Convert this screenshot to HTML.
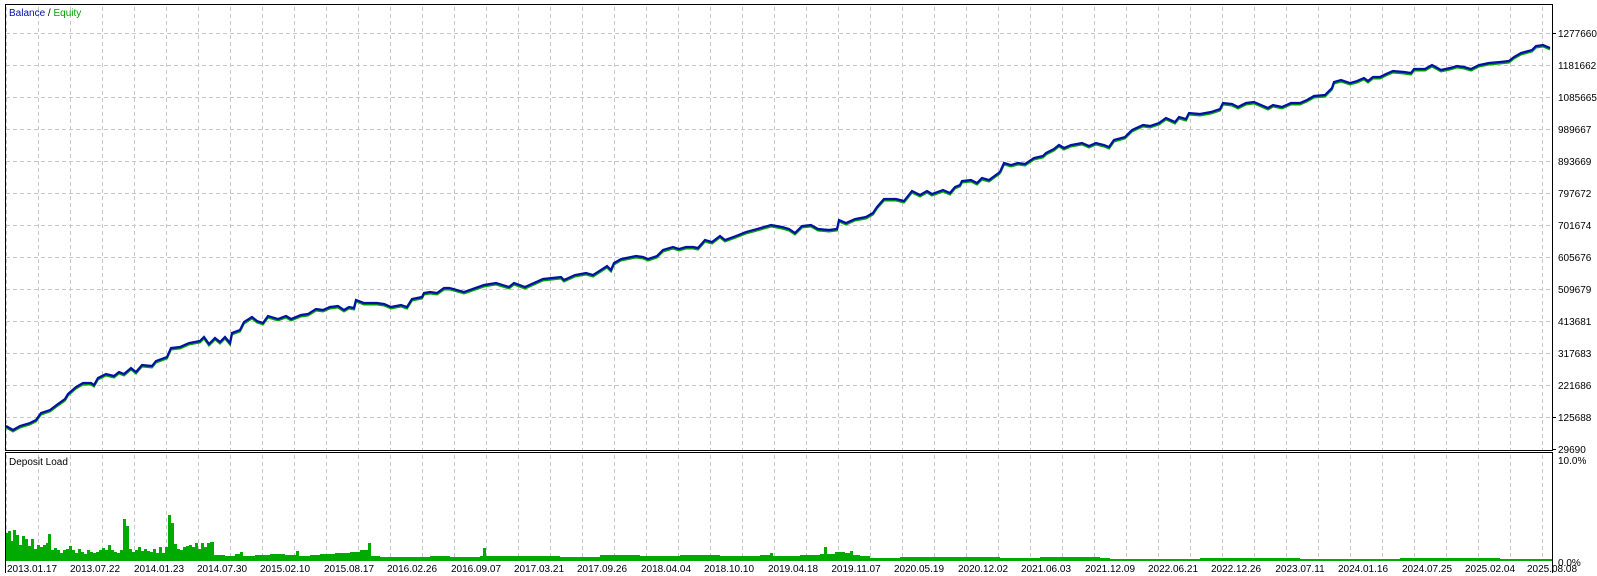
<!DOCTYPE html>
<html><head><meta charset="utf-8"><style>
html,body{margin:0;padding:0;background:#fff;width:1597px;height:576px;overflow:hidden}
svg{display:block}
text{font-family:"Liberation Sans",sans-serif;font-size:10px;fill:#000}
</style></head><body>
<svg width="1597" height="576" viewBox="0 0 1597 576">
<defs>
<pattern id="vg" x="38" y="0" width="32" height="576" patternUnits="userSpaceOnUse">
<line x1="0.5" y1="0" x2="0.5" y2="576" stroke="#c8c8c8" stroke-dasharray="4,3"/>
</pattern>
</defs>
<rect width="1597" height="576" fill="#fff"/>
<rect x="6" y="5" width="1547" height="446" fill="url(#vg)"/>
<g stroke="#c8c8c8" stroke-dasharray="4,3">
<line x1="6" y1="33.5" x2="1553" y2="33.5"/><line x1="6" y1="65.5" x2="1553" y2="65.5"/><line x1="6" y1="97.5" x2="1553" y2="97.5"/><line x1="6" y1="129.5" x2="1553" y2="129.5"/><line x1="6" y1="161.5" x2="1553" y2="161.5"/><line x1="6" y1="193.5" x2="1553" y2="193.5"/><line x1="6" y1="225.5" x2="1553" y2="225.5"/><line x1="6" y1="257.5" x2="1553" y2="257.5"/><line x1="6" y1="289.5" x2="1553" y2="289.5"/><line x1="6" y1="321.5" x2="1553" y2="321.5"/><line x1="6" y1="353.5" x2="1553" y2="353.5"/><line x1="6" y1="385.5" x2="1553" y2="385.5"/><line x1="6" y1="417.5" x2="1553" y2="417.5"/>
</g>
<rect x="6" y="454" width="1547" height="106" fill="url(#vg)"/>
<rect x="5.5" y="4.5" width="1547" height="446" fill="none" stroke="#000"/>
<rect x="5.5" y="452.5" width="1547" height="120" fill="none" stroke="#000"/>
<rect x="6" y="561" width="1546" height="15" fill="#fff"/>
<line x1="5.5" y1="452" x2="5.5" y2="562" stroke="#000"/>
<line x1="1552.5" y1="452" x2="1552.5" y2="562" stroke="#000"/>
<g fill="none" stroke-linejoin="miter">
<g stroke="#00a000" stroke-width="2" transform="translate(0,1.5)">
<polyline points="6,426 13,430 20,426 30,423 36,420 41,413 50,410 58,404 65,399 68,394 76,387 83,383 91,383 94,385 98,378 106,374 114,376 119,372 124,374 131,368 136,372 142,365 152,366 156,361 167,357 171,348 180,347 189,343 200,341 204,337 209,344 215,338 220,342 225,337 230,343 232,333 240,330 244,322 252,317 257,321 263,323 268,316 278,319 286,316 291,319 301,315 308,314 316,309 323,310 330,307 338,306 344,310 349,307 354,308 356,300 364,303 377,303 384,304 391,307 401,305 407,307 412,299 422,297 424,293 430,292 437,293 444,288 450,288"/>
<polyline points="450,288 464,292 484,285 496,283 509,287 514,283 525,287 543,279 561,277 564,280 575,275 586,273 593,275 604,268 607,266 611,270 614,263 621,259 636,256 643,257 648,259 657,256 663,250 673,247 679,249 686,247 693,247 698,248 705,240 712,242 720,236 725,240 736,236 746,232 757,229 764,227 771,225 782,227 789,229 795,233 802,226 811,225 818,229 829,230 837,229 839,220 846,223 855,219 866,217 873,213 877,207 884,199 896,199 904,201 912,191 920,195 927,191 932,194 943,190 950,193 955,187 960,185 962,181 971,180 977,183 982,178 989,180 1000,172"/>
<polyline points="1000,172 1004,163 1011,165 1018,163 1025,164 1034,158 1043,156 1046,153 1054,149 1059,145 1064,148 1071,145 1082,143 1089,146 1096,143 1104,145 1109,147 1114,140 1125,137 1132,130 1143,125 1150,126 1159,123 1166,118 1175,122 1179,117 1186,119 1189,113 1200,114 1211,112 1220,109 1223,103 1232,104 1238,107 1246,103 1254,102 1261,105 1268,108 1273,105 1282,107 1291,103 1300,103 1307,100 1314,96 1325,95 1332,88 1334,82 1341,80 1350,83 1357,81 1364,78 1368,81 1373,77 1380,77 1386,74 1393,71 1404,72 1411,73 1414,69 1425,69 1432,65 1441,70 1450,68 1457,66 1464,67 1471,69 1479,65 1489,63 1500,62 1509,61 1514,57 1521,53 1532,50 1536,46 1543,45 1550,48"/>
</g>
<g stroke="#0010a8" stroke-width="2.2">
<polyline points="6,426 13,430 20,426 30,423 36,420 41,413 50,410 58,404 65,399 68,394 76,387 83,383 91,383 94,385 98,378 106,374 114,376 119,372 124,374 131,368 136,372 142,365 152,366 156,361 167,357 171,348 180,347 189,343 200,341 204,337 209,344 215,338 220,342 225,337 230,343 232,333 240,330 244,322 252,317 257,321 263,323 268,316 278,319 286,316 291,319 301,315 308,314 316,309 323,310 330,307 338,306 344,310 349,307 354,308 356,300 364,303 377,303 384,304 391,307 401,305 407,307 412,299 422,297 424,293 430,292 437,293 444,288 450,288"/>
<polyline points="450,288 464,292 484,285 496,283 509,287 514,283 525,287 543,279 561,277 564,280 575,275 586,273 593,275 604,268 607,266 611,270 614,263 621,259 636,256 643,257 648,259 657,256 663,250 673,247 679,249 686,247 693,247 698,248 705,240 712,242 720,236 725,240 736,236 746,232 757,229 764,227 771,225 782,227 789,229 795,233 802,226 811,225 818,229 829,230 837,229 839,220 846,223 855,219 866,217 873,213 877,207 884,199 896,199 904,201 912,191 920,195 927,191 932,194 943,190 950,193 955,187 960,185 962,181 971,180 977,183 982,178 989,180 1000,172"/>
<polyline points="1000,172 1004,163 1011,165 1018,163 1025,164 1034,158 1043,156 1046,153 1054,149 1059,145 1064,148 1071,145 1082,143 1089,146 1096,143 1104,145 1109,147 1114,140 1125,137 1132,130 1143,125 1150,126 1159,123 1166,118 1175,122 1179,117 1186,119 1189,113 1200,114 1211,112 1220,109 1223,103 1232,104 1238,107 1246,103 1254,102 1261,105 1268,108 1273,105 1282,107 1291,103 1300,103 1307,100 1314,96 1325,95 1332,88 1334,82 1341,80 1350,83 1357,81 1364,78 1368,81 1373,77 1380,77 1386,74 1393,71 1404,72 1411,73 1414,69 1425,69 1432,65 1441,70 1450,68 1457,66 1464,67 1471,69 1479,65 1489,63 1500,62 1509,61 1514,57 1521,53 1532,50 1536,46 1543,45 1550,48"/>
</g>
</g>
<path fill="#00aa00" d="M6,561 V533 H8 V531 H11 V541 H13 V530 H16 V535 H19 V545 H22 V536 H25 V539 H28 V546 H31 V539 H34 V549 H37 V545 H40 V547 H43 V545 H46 V543 H48 V534 H51 V550 H54 V548 H57 V550 H60 V553 H63 V550 H66 V549 H69 V546 H72 V550 H75 V553 H78 V549 H81 V552 H84 V554 H87 V550 H90 V552 H93 V553 H96 V552 H99 V550 H102 V548 H105 V550 H108 V545 H111 V550 H114 V552 H117 V553 H120 V550 H123 V519 H126 V526 H129 V549 H132 V552 H135 V550 H138 V547 H141 V551 H144 V549 H147 V551 H150 V552 H153 V549 H156 V553 H159 V547 H162 V553 H165 V547 H168 V515 H171 V523 H174 V544 H177 V549 H180 V550 H183 V547 H186 V546 H189 V545 H192 V547 H195 V543 H198 V549 H201 V543 H204 V547 H207 V543 H210 V542 H214 V555 H225 V556 H235 V554 H240 V552 H243 V556 H255 V555 H270 V554 H285 V555 H296 V551 H299 V556 H310 V555 H320 V554 H335 V553 H350 V552 H360 V550 H368 V543 H371 V556 H380 V557 H420 V557 H430 V556 H450 V557 H480 V556 H483 V548 H486 V556 H520 V556 H560 V557 H600 V555 H640 V556 H680 V555 H720 V556 H760 V555 H770 V553 H773 V556 H800 V555 H820 V554 H824 V547 H827 V554 H835 V552 H845 V553 H850 V551 H853 V555 H860 V556 H870 V558 H900 V557 H960 V557 H1000 V558 H1040 V557 H1100 V558 H1110 V559 H1200 V558 H1300 V559 H1400 V558 H1500 V559 H1552 V561 Z"/>
<text x="9" y="16"><tspan fill="#0010a8">Balance</tspan> / <tspan fill="#00a000">Equity</tspan></text>
<text x="9" y="465">Deposit Load</text>
<g>
<text x="1558" y="37">1277660</text><text x="1558" y="69">1181662</text><text x="1558" y="101">1085665</text><text x="1558" y="133">989667</text><text x="1558" y="165">893669</text><text x="1558" y="197">797672</text><text x="1558" y="229">701674</text><text x="1558" y="261">605676</text><text x="1558" y="293">509679</text><text x="1558" y="325">413681</text><text x="1558" y="357">317683</text><text x="1558" y="389">221686</text><text x="1558" y="421">125688</text><text x="1558" y="453">29690</text>
<text x="1558" y="464">10.0%</text><text x="1558" y="566">0.0%</text>
</g>
<g stroke="#000"><line x1="1553" y1="33.5" x2="1556" y2="33.5"/><line x1="1553" y1="417.5" x2="1556" y2="417.5"/><line x1="1553" y1="449.5" x2="1556" y2="449.5"/></g>
<g text-anchor="middle">
<text x="32" y="572">2013.01.17</text><text x="95" y="572">2013.07.22</text><text x="159" y="572">2014.01.23</text><text x="222" y="572">2014.07.30</text><text x="285" y="572">2015.02.10</text><text x="349" y="572">2015.08.17</text><text x="412" y="572">2016.02.26</text><text x="476" y="572">2016.09.07</text><text x="539" y="572">2017.03.21</text><text x="602" y="572">2017.09.26</text><text x="666" y="572">2018.04.04</text><text x="729" y="572">2018.10.10</text><text x="793" y="572">2019.04.18</text><text x="856" y="572">2019.11.07</text><text x="919" y="572">2020.05.19</text><text x="983" y="572">2020.12.02</text><text x="1046" y="572">2021.06.03</text><text x="1110" y="572">2021.12.09</text><text x="1173" y="572">2022.06.21</text><text x="1236" y="572">2022.12.26</text><text x="1300" y="572">2023.07.11</text><text x="1363" y="572">2024.01.16</text><text x="1427" y="572">2024.07.25</text><text x="1490" y="572">2025.02.04</text><text x="1552" y="572">2025.08.08</text>
</g>
</svg>
</body></html>
